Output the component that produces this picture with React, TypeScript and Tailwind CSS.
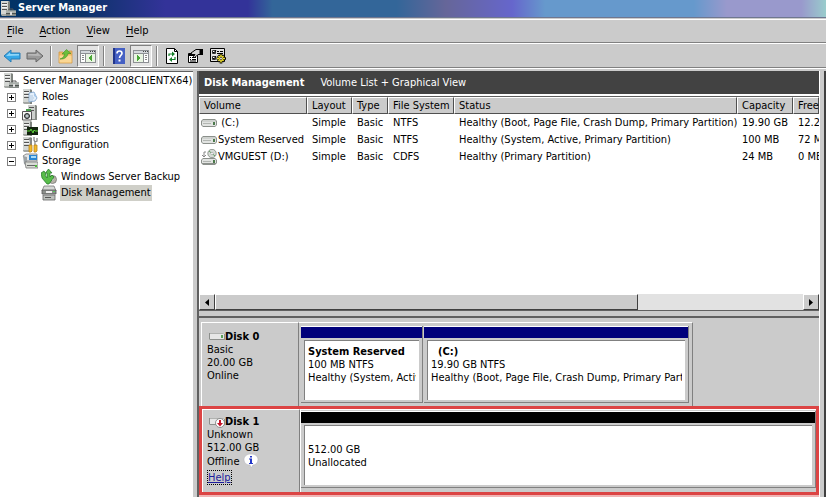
import type { ReactNode } from 'react';
import clsx from 'clsx';

/* ---------- icons ---------- */

function Tower() {
  return (
    <>
      <path d="M1 0h8l1 1v14H2l-1-1z" fill="#a4a8a4" />
      <path d="M1 0h7v13H1z" fill="#d3d6d3" />
      <path d="M8 1h2v14H8z" fill="#7e837e" />
      <path d="M2 2h5v1H2zM2 5h5v1H2zM2 8h5v1H2z" fill="#555" />
      <path d="M2 3h5v1H2zM2 6h5v1H2z" fill="#f4f4f4" />
    </>
  );
}

function ServerIcon() {
  return (
    <svg className="size-4 shrink-0" viewBox="0 0 16 16">
      <Tower />
      <path d="M9 9.500V8h4v1.500" fill="none" stroke="#555" />
      <path d="M6 9.500h10V15H6z" fill="#858b88" />
      <path d="M6 9.500h10V12H6z" fill="#aab0ac" />
      <path d="M6 12h10v1H6z" fill="#4d5350" />
      <path d="M10 11h2v3h-2z" fill="#ddd" />
    </svg>
  );
}

function RolesIcon() {
  return (
    <svg className="size-4 shrink-0" viewBox="0 0 16 16">
      <Tower />
      <path d="M7 4l5-1 3 6-2 3-6 1z" fill="#e4f0fb" stroke="#7aa0c8" strokeWidth="0.8" />
      <path d="M12 3l3 6-3-2z" fill="#a6c8ea" />
      <path d="M8 7h3M8 9h4M8 11h3" stroke="#9db8d4" strokeWidth="0.7" />
    </svg>
  );
}

function FeaturesIcon() {
  return (
    <svg className="size-4 shrink-0" viewBox="0 0 16 16">
      <path d="M6 0h8l1 1v14H7l-1-1z" fill="#858a85" />
      <path d="M6 0h7v14H6z" fill="#cdd0cd" />
      <path d="M7 2h5v1H7zM7 5h5v1H7z" fill="#555" />
      <path d="M4 4h5v2H4z" fill="#46a04a" />
      <path d="M.5 6.500h9v8.500h-9z" fill="#f5f5f5" stroke="#555" />
      <circle cx="5" cy="11" r="2.500" fill="#8f9b9f" stroke="#222" />
      <circle cx="5" cy="11" r="0.8" fill="#fff" />
    </svg>
  );
}

function DiagnosticsIcon() {
  return (
    <svg className="size-4 shrink-0" viewBox="0 0 16 16">
      <Tower />
      <path d="M5 6h11v8H5z" fill="#12240f" />
      <path d="M5 10h3l1-2 2 4 1-3 1 1h3" fill="none" stroke="#5ed43a" />
    </svg>
  );
}

function ConfigurationIcon() {
  return (
    <svg className="size-4 shrink-0" viewBox="0 0 16 16">
      <Tower />
      <path d="M7 1l2 3v4" fill="none" stroke="#888" strokeWidth="1.500" />
      <path d="M12 0v3l1 2 2-1V1M13 5v3" fill="none" stroke="#888" strokeWidth="1.300" />
      <path d="M7 8h3v6l-1 1H7zM12 8h3v6l-1 1h-2z" fill="#f4b928" stroke="#b9841a" strokeWidth="0.8" />
    </svg>
  );
}

function StorageIcon() {
  return (
    <svg className="size-4 shrink-0" viewBox="0 0 16 16">
      <path d="M1 3l3-2h11v7H5z" fill="#e3e6e8" stroke="#777" strokeWidth="0.8" />
      <path d="M7 2h8v5H7z" fill="#2a86d2" />
      <path d="M9 3h5v2H9z" fill="#a9dcf8" />
      <path d="M1 3l4 1v9l-3-2z" fill="#9ca3a6" />
      <path d="M3 9h13v6H4z" fill="#d9dcd6" stroke="#777" strokeWidth="0.8" />
      <path d="M5 12h8v1H5z" fill="#666" />
      <path d="M13 12h2v2h-2z" fill="#4bbd3a" />
    </svg>
  );
}

function BackupIcon() {
  return (
    <svg className="size-4 shrink-0" viewBox="0 0 16 16">
      <circle cx="11.500" cy="10.500" r="4" fill="#b9b4a8" stroke="#777" strokeWidth="0.8" />
      <circle cx="11.500" cy="10.500" r="1.200" fill="#fff" stroke="#888" strokeWidth="0.6" />
      <path
        d="M0 4l3-2 2 3-1 1 2 3V4L4.500 4 7.500 0 11 4H9v4l2-2 2 2-5 7H6L1 9z"
        fill="#58bd4a"
        stroke="#1f7426"
        strokeWidth="0.7"
      />
    </svg>
  );
}

function DiskMgmtIcon() {
  return (
    <svg className="size-4 shrink-0" viewBox="0 0 16 16">
      <path d="M3 1h10l2 5H1z" fill="#d6d8d6" stroke="#777" strokeWidth="0.8" />
      <path d="M1 5h14v4H1z" fill="#8c908c" stroke="#555" strokeWidth="0.8" />
      <path d="M2 10h12v5H2z" fill="#bcc0bc" stroke="#666" strokeWidth="0.8" />
      <path d="M5 6h6v2H5z" fill="#eee" />
      <path d="M4 12h6v1H4z" fill="#555" />
      <path d="M12 6h2v1h-2z" fill="#5c5" />
    </svg>
  );
}

function DriveIcon() {
  return (
    <svg className="size-4 shrink-0" viewBox="0 0 16 16">
      <path d="M2 4h12l2 2v4l-2 2H2l-2-2V6z" fill="#8b908b" />
      <path d="M2 5h12l1 1v1H1V6z" fill="#cfd2cf" />
      <path d="M1 7h14v3l-1 1H2l-1-1z" fill="#e2e4e2" />
      <path d="M2 8h8v1H2z" fill="#b2b6b2" />
      <path d="M12 7h2v3h-2z" fill="#4c7a4c" />
    </svg>
  );
}

function CdIcon() {
  return (
    <svg className="size-4 shrink-0" viewBox="0 0 16 16">
      <circle cx="11" cy="4.500" r="4.200" fill="#d5dbd5" stroke="#7d857d" strokeWidth="0.8" />
      <path d="M11 4.500L8 2M11 4.500l3 2.500" stroke="#63a063" />
      <circle cx="11" cy="4.500" r="1.200" fill="#fff" stroke="#888" strokeWidth="0.5" />
      <path d="M5 3H3v5M1 6l2 2 2-2" fill="none" stroke="#888" />
      <path d="M2 9h12l2 2v3l-2 2H2l-2-2v-3z" fill="#8b908b" />
      <path d="M2 10h12l1 1v3H1v-3z" fill="#e2e4e2" />
      <path d="M2 12h8v1H2z" fill="#b2b6b2" />
      <path d="M12 11h2v3h-2z" fill="#4c7a4c" />
    </svg>
  );
}

function SmallDisk({ offline }: { offline?: boolean }) {
  return (
    <svg className="h-3 w-4 shrink-0" viewBox="0 0 16 12">
      <path d="M0 2h1v6h14V3h1v6H1L0 8z" fill="#8c8f8c" />
      <path d="M1 2h13l1 1H1z" fill="#b0b2b0" />
      <path d="M1 3h14v5H1z" fill="#e6e6e6" />
      <path d="M12 4h2v3h-2z" fill="#5aa05a" />
      {offline && (
        <>
          <circle cx="11" cy="7" r="4.500" fill="#fff" stroke="#777" strokeWidth="0.8" />
          <path d="M10 4h2v3h2l-3 3.500L8 7h2z" fill="#c4142a" />
        </>
      )}
    </svg>
  );
}

function InfoBalloon() {
  return (
    <svg className="size-4 shrink-0" viewBox="0 0 16 16">
      <path
        d="M8 1c4 0 7 2 7 5.500S12.500 12 10 12l-2 3-1-3C3.500 12 1 10 1 6.500S4 1 8 1z"
        fill="#fff"
        stroke="#b5b5bd"
        strokeWidth="0.6"
      />
      <path d="M7 3h2v1.500H7zM6 5.500h3V10h1v1H6v-1h1V6.500H6z" fill="#2438c8" />
    </svg>
  );
}

function Arrow({ back }: { back?: boolean }) {
  return back ? (
    <svg className="h-4 w-[18px]" viewBox="0 0 18 16">
      <path d="M1 8l7-6v3h9v6H8v3z" fill="#36a8e8" stroke="#2a7cb4" />
      <path d="M3 8l4-3.500V6h9v1.500z" fill="#8fd6f8" />
    </svg>
  ) : (
    <svg className="h-4 w-[18px]" viewBox="0 0 18 16">
      <path d="M17 8l-7-6v3H1v6h9v3z" fill="#9a9a9a" stroke="#666" />
      <path d="M15 8l-4-3.500V6H2v1.500z" fill="#b8b8b8" />
    </svg>
  );
}

function UpFolder() {
  return (
    <svg className="size-4" viewBox="0 0 16 16">
      <path d="M1 4h4l1 1h4l1-2h3v12H1z" fill="#f0b964" stroke="#d09a48" strokeWidth="0.8" />
      <path d="M1.500 7.500h12v7h-12z" fill="#fad795" />
      <path d="M2 11c3-1 4-2 4.500-5H4l4.500-4.500L13 5.500h-3c-.5 3-3 6-8 5.500z" fill="#6abf3c" stroke="#3f8f22" strokeWidth="0.6" />
    </svg>
  );
}

function PaneIcon({ flip }: { flip?: boolean }) {
  return (
    <svg className="size-4" viewBox="0 0 16 16" shapeRendering="crispEdges">
      <path d="M0 2h16v13H0z" fill="#8d9094" />
      <path d="M1 6h14v8H1z" fill="#fff" />
      <path d="M1 3h14v2H1z" fill="#d4d8dc" />
      <path d="M10 3h1v1h-1zM12 3h1v1h-1zM14 3h1v1h-1z" fill="#444" />
      {flip ? (
        <>
          <path d="M10 6h1v8h-1z" fill="#8d9094" />
          <path d="M12 7h2v1h-2zM12 9h2v1h-2zM12 11h2v1h-2z" fill="#888" />
          <path d="M1 6h9v8H1z" fill="#e9f5e2" />
          <path d="M4 7v6l4-3z" fill="#48a636" />
        </>
      ) : (
        <>
          <path d="M5 6h1v8H5z" fill="#8d9094" />
          <path d="M2 7h2v1H2zM2 9h2v1H2zM2 11h2v1H2z" fill="#888" />
          <path d="M6 6h9v8H6z" fill="#e9f5e2" />
          <path d="M12 7v6L8 10z" fill="#48a636" />
        </>
      )}
    </svg>
  );
}

function HelpIcon() {
  return (
    <svg className="h-4 w-[14px]" viewBox="0 0 14 16">
      <path d="M1 0h12v16H1z" fill="#4560c4" />
      <path d="M1 0h2v16H1z" fill="#22368a" />
      <path d="M5 5.500C5 3.500 6 3 7.500 3S10 4 10 5.500 7.500 7.500 7.500 10" fill="none" stroke="#fff" strokeWidth="1.600" />
      <path d="M6.500 11.500h2v2h-2z" fill="#fff" />
    </svg>
  );
}

function RefreshIcon() {
  return (
    <svg className="size-4" viewBox="0 0 16 16">
      <path d="M2.500.5h8l3 3v12h-11z" fill="#fff" stroke="#000" />
      <path d="M10.500.5v3h3" fill="none" stroke="#000" />
      <path d="M5 8V6h4" fill="none" stroke="#15802a" strokeWidth="1.200" />
      <path d="M8 3.500L11 6 8 8.500z" fill="#15802a" />
      <path d="M11 9v2.500H7" fill="none" stroke="#15802a" strokeWidth="1.200" />
      <path d="M8 9l-3 2.500L8 14z" fill="#15802a" />
    </svg>
  );
}

function PropertiesIcon() {
  return (
    <svg className="size-4" viewBox="0 0 16 16">
      <path d="M1.500 5.500h9v9h-9z" fill="#fff" stroke="#000" />
      <path d="M2 6h8v2H2z" fill="#000" />
      <path d="M3 9.500h1M5 9.500h4M3 11.500h1M5 11.500h4M3 13h6" stroke="#000" />
      <path d="M4 5l5-3.500h4v5h-2l-2 2-1.500 1-1-1L8 6.500H5z" fill="#d2d2d2" stroke="#000" />
      <path d="M13 1h3v6h-3z" fill="#000" />
    </svg>
  );
}

function SettingsIcon() {
  return (
    <svg className="size-4" viewBox="0 0 16 16">
      <path d="M.5.500h14v13H.5z" fill="#e4e4e4" stroke="#000" />
      <path d="M2.500 2.500h3v3h-3zM2.500 8.500h3v3h-3z" fill="#fff" stroke="#333" />
      <path d="M3 4l1 1 2-3M7 3.500h2M7 5.500h6M10 3.500h3M3 10l1 1 2-3" fill="none" stroke="#000" />
      <path d="M11 6v9.500M6.500 10.500H16M8 7.500l6 6M14 7.500l-6 6" stroke="#000" strokeWidth="2.600" />
      <path d="M11 6.500v8M7 10.500h8M8.500 8l5 5M13.500 8l-5 5" stroke="#f5e531" strokeWidth="1.500" />
      <circle cx="11" cy="10.500" r="1.200" fill="#fff" stroke="#000" strokeWidth="0.6" />
    </svg>
  );
}

/* ---------- shell ---------- */

const menus = ['File', 'Action', 'View', 'Help'];

function Separator() {
  return <div className="mr-[2px] ml-1 h-5 w-[2px] border-r border-l border-[#808080] border-r-white" />;
}

function ToolButton({ label, active, children }: { label: string; active?: boolean; children: ReactNode }) {
  return (
    <button
      aria-label={label}
      className={clsx(
        'flex h-[22px] items-center justify-center',
        active ? 'w-[22px] border border-[#808080] border-r-white border-b-white bg-[#e4e4e4]' : 'w-[23px]',
      )}
    >
      {children}
    </button>
  );
}

function Toolbar() {
  return (
    <div className="flex h-6 items-center border-b border-[#808080]">
      <ToolButton label="Back"><Arrow back /></ToolButton>
      <ToolButton label="Forward"><Arrow /></ToolButton>
      <Separator />
      <ToolButton label="Up one level"><UpFolder /></ToolButton>
      <ToolButton label="Show tree" active><PaneIcon /></ToolButton>
      <Separator />
      <ToolButton label="Help"><HelpIcon /></ToolButton>
      <ToolButton label="Show actions" active><PaneIcon flip /></ToolButton>
      <Separator />
      <ToolButton label="Refresh"><RefreshIcon /></ToolButton>
      <ToolButton label="Properties"><PropertiesIcon /></ToolButton>
      <ToolButton label="Settings"><SettingsIcon /></ToolButton>
    </div>
  );
}

/* ---------- tree ---------- */

const nodes = [
  { label: 'Roles', icon: RolesIcon },
  { label: 'Features', icon: FeaturesIcon },
  { label: 'Diagnostics', icon: DiagnosticsIcon },
  { label: 'Configuration', icon: ConfigurationIcon },
  { label: 'Storage', icon: StorageIcon, open: true },
];

function Expander({ open, label }: { open?: boolean; label: string }) {
  return (
    <button aria-label={label} className="size-[9px] shrink-0 border border-[#808080] bg-white">
      <svg className="size-[7px]" viewBox="0 0 7 7" shapeRendering="crispEdges">
        <path d={open ? 'M1 3h5v1H1z' : 'M1 3h5v1H1zM3 1h1v5H3z'} fill="#000" />
      </svg>
    </button>
  );
}

function Tree() {
  return (
    <nav className="w-[193px] shrink-0 overflow-hidden border-t border-[#606060] bg-white pt-px whitespace-nowrap">
      <div className="flex h-4 items-center gap-1 pl-[3px]">
        <ServerIcon />
        Server Manager (2008CLIENTX64)
      </div>
      <ul>
        {nodes.map(({ label, icon: Icon, open }) => (
          <li key={label} className="flex h-4 items-center gap-[6px] pl-[7px]">
            <Expander open={open} label={label} />
            <span className="flex items-center gap-1">
              <Icon />
              {label}
            </span>
          </li>
        ))}
        <li className="flex h-4 items-center gap-1 pl-[41px]">
          <BackupIcon />
          Windows Server Backup
        </li>
        <li className="flex h-4 items-center gap-[3px] pl-[41px]">
          <DiskMgmtIcon />
          <span className="bg-[#cfcfc8] px-px leading-4">Disk Management</span>
        </li>
      </ul>
    </nav>
  );
}

/* ---------- volume list ---------- */

const columns = [
  { name: 'Volume', width: 'w-[108px]' },
  { name: 'Layout', width: 'w-[45px]' },
  { name: 'Type', width: 'w-[36px]' },
  { name: 'File System', width: 'w-[66px]' },
  { name: 'Status', width: 'w-[283px]' },
  { name: 'Capacity', width: 'w-[56px]' },
  { name: 'Free', width: 'w-auto' },
];

const volumes = [
  {
    name: '\u00a0(C:)',
    icon: DriveIcon,
    cells: ['Simple', 'Basic', 'NTFS', 'Healthy (Boot, Page File, Crash Dump, Primary Partition)', '19.90 GB', '12.2'],
  },
  {
    name: 'System Reserved',
    icon: DriveIcon,
    cells: ['Simple', 'Basic', 'NTFS', 'Healthy (System, Active, Primary Partition)', '100 MB', '72 M'],
  },
  {
    name: 'VMGUEST (D:)',
    icon: CdIcon,
    cells: ['Simple', 'Basic', 'CDFS', 'Healthy (Primary Partition)', '24 MB', '0 MB'],
  },
];

function VolumeList() {
  return (
    <div className="min-h-0 flex-1 overflow-hidden border-t border-[#606060] bg-white">
      <table className="w-full table-fixed border-collapse whitespace-nowrap">
        <thead>
          <tr>
            {columns.map((c) => (
              <th key={c.name} className={clsx('overflow-hidden p-0 text-left font-normal', c.width)}>
                <div className="h-[17px] border border-white border-r-[#505050] border-b-[#505050] bg-[#cbcbcb] pl-1 leading-4">
                  {c.name}
                </div>
              </th>
            ))}
          </tr>
        </thead>
        <tbody>
          {volumes.map(({ name, icon: Icon, cells }) => (
            <tr key={name} className="h-[17px] leading-[17px]">
              <td className="p-0 pl-[2px]">
                <span className="flex h-[17px] items-center gap-px">
                  <Icon />
                  {name}
                </span>
              </td>
              {cells.map((cell, i) => (
                <td key={i} className="overflow-hidden p-0 pl-[5px]">
                  {cell}
                </td>
              ))}
            </tr>
          ))}
        </tbody>
      </table>
    </div>
  );
}

function ScrollArrow({ right }: { right?: boolean }) {
  return (
    <button
      aria-label={right ? 'Scroll right' : 'Scroll left'}
      className="flex size-4 shrink-0 items-center justify-center border border-white border-r-[#404040] border-b-[#404040] bg-[#cbcbcb]"
    >
      <svg className="h-[7px] w-1" viewBox="0 0 4 7">
        <path d={right ? 'M0 0v7l4-3.500z' : 'M4 0v7L0 3.500z'} fill="#000" />
      </svg>
    </button>
  );
}

function ScrollBar() {
  return (
    <div className="flex h-4 shrink-0 bg-[#e2e2e2]">
      <ScrollArrow />
      <div className="flex-1">
        <div className="h-4 w-[72%] border border-white border-r-[#404040] border-b-[#404040] bg-[#cbcbcb]" />
      </div>
      <ScrollArrow right />
    </div>
  );
}

/* ---------- graphical view ---------- */

function DiskLabel({ name, lines, offline }: { name: string; lines: string[]; offline?: boolean }) {
  return (
    <div
      className={clsx(
        'w-[98px] shrink-0 border-t border-r border-l border-white border-r-[#808080] leading-[13px]',
        offline ? 'pt-[5px] pl-1' : 'pt-[7px] pl-[5px]',
      )}
    >
      <div className="flex h-[13px] items-center pl-[2px] font-bold">
        <SmallDisk offline={offline} />
        {name}
      </div>
      {lines.map((line) => (
        <div key={line}>{line}</div>
      ))}
      {offline && (
        <>
          <div className="flex h-[14px] items-center gap-1">
            Offline <InfoBalloon />
          </div>
          <a href="#help" className="mt-[2px] inline-block border border-dotted border-black text-[#1c1c9c] underline">
            Help
          </a>
        </>
      )}
    </div>
  );
}

type PartitionProps = { bar: string; size: string; title?: string; lines: string[] };

function Partition({ bar, size, title, lines }: PartitionProps) {
  return (
    <div className={clsx('flex min-w-0 flex-col border-r border-b border-[#808080]', size)}>
      <div className={clsx('h-3 border-t border-white', bar)} />
      <div className="mx-[3px] my-[2px] flex min-h-0 flex-1 flex-col justify-center overflow-hidden border-t border-l border-[#808080] bg-white px-[3px] leading-[13px] whitespace-nowrap">
        {title && <div className="font-bold whitespace-pre">{title}</div>}
        {lines.map((line) => (
          <div key={line} className="overflow-hidden">{line}</div>
        ))}
        {title && <div className="h-3 shrink-0" />}
      </div>
    </div>
  );
}

function GraphicalView() {
  return (
    <div className="shrink-0 border-t border-[#606060] pt-1">
      <div className="flex h-[84px] pl-[2px]">
        <DiskLabel name="Disk 0" lines={['Basic', '20.00 GB', 'Online']} />
        <div className="flex w-[394px] gap-px border-t border-r border-white border-r-[#808080] pt-[3px] pr-[3px] pb-[3px] pl-[2px]">
          <Partition
            bar="bg-[#00007b]"
            size="w-[122px] shrink-0"
            title="System Reserved"
            lines={['100 MB NTFS', 'Healthy (System, Activ']}
          />
          <Partition
            bar="bg-[#00007b]"
            size="flex-1"
            title="  (C:)"
            lines={['19.90 GB NTFS', 'Healthy (Boot, Page File, Crash Dump, Primary Parti']}
          />
        </div>
      </div>
      <div className="flex h-[89px] border-[3px] border-[#dc4444]">
        <DiskLabel name="Disk 1" lines={['Unknown', '512.00 GB']} offline />
        <div className="flex min-w-0 flex-1 border-t border-l border-white pt-px pb-1">
          <Partition bar="bg-black" size="flex-1" lines={['512.00 GB', 'Unallocated']} />
        </div>
      </div>
      <div className="h-[2px] bg-[#f0b4b4]" />
    </div>
  );
}

export default function App() {
  return (
    <div className="flex h-screen flex-col overflow-hidden bg-[#cbcbcb] font-['DejaVu_Sans_Condensed','Noto_Sans',sans-serif] text-[11px] text-black">
      <header className="flex h-[17px] shrink-0 items-center gap-[2px] bg-[linear-gradient(90deg,#003366_0%,#0b3368_10%,#333399_20%,#333399_30%,#336699_33%,#336699_48%,#666699_54%,#6666cc_62%,#6699cc_66%,#6699cc_84%,#9999cc_88%,#9999cc_97%,#99cccc_100%)]">
        <ServerIcon />
        <h1 className="font-bold text-white">Server Manager</h1>
      </header>
      <div className="h-[3px] shrink-0 border-t border-b border-t-[#6f7790] border-b-white" />
      <div className="flex h-[23px] shrink-0 items-center gap-4 border-b border-[#808080] pt-px pl-[7px]">
        {menus.map((m) => (
          <button key={m}>
            <span className="underline underline-offset-2">{m[0]}</span>
            {m.slice(1)}
          </button>
        ))}
      </div>
      <div className="shrink-0 border-t border-b border-white">
        <Toolbar />
      </div>

      <div className="flex min-h-0 flex-1 pt-[2px]">
        <Tree />
        <main className="ml-1 flex min-w-0 flex-1 flex-col border-l-2 border-[#606060]">
          <div className="flex h-[23px] shrink-0 items-center gap-4 bg-[#424242] pt-px pl-[5px] text-white">
            <h2 className="font-bold">Disk Management</h2>
            <span>Volume List + Graphical View</span>
          </div>
          <div className="h-[2px] shrink-0 bg-white" />
          <VolumeList />
          <ScrollBar />
          <div className="h-[7px] shrink-0 border-t border-b border-t-[#606060] border-b-[#606060] bg-[#cbcbcb]" />
          <GraphicalView />
        </main>
        <div className="w-[7px] shrink-0 border-r-2 border-l border-l-white border-r-[#404040]" />
      </div>
    </div>
  );
}
